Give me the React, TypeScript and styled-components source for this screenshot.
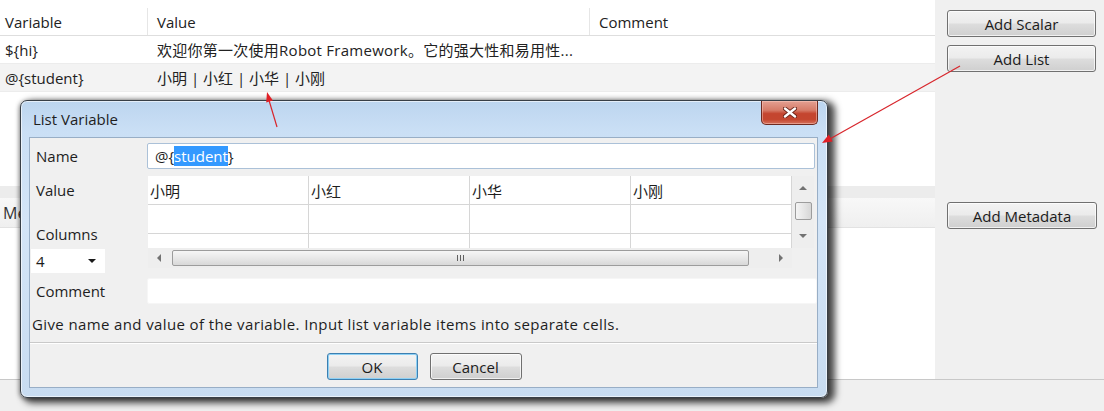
import React from 'react';
import styled, { createGlobalStyle } from 'styled-components';

const UI_FONT = `"Open Sans", "Noto Sans CJK SC", sans-serif`;

const GlobalStyle = createGlobalStyle`
  html, body { margin: 0; padding: 0; background: #ffffff; }
  body { font-family: ${UI_FONT}; font-size: 15px; color: #1b1b1b; }
  * { box-sizing: border-box; }
`;

const Page = styled.div`
  position: relative;
  width: 1104px;
  height: 411px;
  overflow: hidden;
  display: flex;
  flex-direction: column;
  background: #ffffff;
`;

const Workspace = styled.div`
  flex: 0 0 379px;
  display: flex;
`;

const Editor = styled.div`
  flex: 0 0 935px;
  display: flex;
  flex-direction: column;
  background: #ffffff;
`;

const TableRow = styled.div<{ $variant: 'head' | 'plain' | 'alt' }>`
  display: grid;
  grid-template-columns: 148px 442px 1fr;
  height: ${p => (p.$variant === 'head' ? 36 : 28)}px;
  padding-top: ${p => (p.$variant === 'head' ? 8 : 0)}px;
  background: ${p => (p.$variant === 'alt' ? '#f3f3f3' : '#ffffff')};
  border-bottom: 1px solid ${p => (p.$variant === 'head' ? '#dedede' : '#ececec')};
`;

const Cell = styled.div<{ $head?: boolean; $first?: boolean; $spread?: boolean }>`
  display: flex;
  align-items: center;
  padding-left: ${p => (p.$first ? 5 : 9)}px;
  white-space: nowrap;
  overflow: hidden;
  color: #222;
  letter-spacing: ${p => (p.$spread ? '0.26px' : 'normal')};
  border-right: ${p => (p.$head ? '1px solid #e6e6e6' : 'none')};
  &:last-child { border-right: none; }
`;

const Gap = styled.div<{ $h: number }>`
  flex: 0 0 ${p => p.$h}px;
`;

const Band = styled.div`
  flex: 0 0 12px;
  background: #ececec;
`;

const MetaRow = styled.div`
  flex: 0 0 30px;
  display: flex;
  align-items: center;
  padding-left: 3px;
  background: linear-gradient(#f8f8f8, #efefef);
  border-bottom: 1px solid #e2e2e2;
  color: #333;
  font-size: 16px;
`;

const Fill = styled.div`
  flex: 1;
  background: #ffffff;
`;

const Side = styled.div`
  flex: 1;
  display: flex;
  flex-direction: column;
  align-items: flex-start;
  padding: 10px 0 0 12px;
  background: #f0f0f0;
`;

const WinButton = styled.button<{ $w: number; $mt?: number; $focus?: boolean }>`
  width: ${p => p.$w}px;
  height: 27px;
  margin-top: ${p => p.$mt ?? 0}px;
  padding: 0;
  font-family: ${UI_FONT};
  font-size: 15px;
  color: #1b1b1b;
  border: 1px solid ${p => (p.$focus ? '#3c7fb1' : '#707070')};
  border-radius: 3px;
  background: linear-gradient(#f3f3f3 0%, #ebebeb 48%, #dddddd 52%, #cfcfcf 100%);
  box-shadow: inset 0 0 0 1px ${p => (p.$focus ? '#8ed0f4' : 'rgba(255,255,255,0.7)')};
`;

const BottomStrip = styled.div`
  flex: 1;
  background: #f0f0f0;
  border-top: 1px solid #c8c8c8;
`;

/* ---------- dialog ---------- */

const Dialog = styled.div`
  position: absolute;
  left: 20px;
  top: 100px;
  width: 808px;
  height: 298px;
  display: flex;
  flex-direction: column;
  padding: 0 9px 9px 8px;
  border: 1px solid #383f47;
  border-radius: 7px;
  background: linear-gradient(#bcd5ef 0px, #cadff5 30px, #d4e5f7 120px, #c8dcf1 100%);
  box-shadow: inset 0 0 0 1px rgba(255, 255, 255, 0.6), 5px 3px 7px 2px rgba(0, 0, 0, 0.72),
    -1px 1px 4px rgba(0, 0, 0, 0.35);
`;

const TitleBar = styled.div`
  flex: 0 0 36px;
  display: flex;
  align-items: flex-start;
  justify-content: space-between;
`;

const Title = styled.div`
  padding: 8px 0 0 4px;
  font-size: 15px;
  color: #1e1e1e;
`;

const CloseButton = styled.div`
  width: 57px;
  height: 24px;
  display: flex;
  align-items: center;
  justify-content: center;
  border: 1px solid #6e2a20;
  border-top: none;
  border-radius: 0 0 5px 5px;
  background: linear-gradient(#e4a092 0%, #d67b68 40%, #c4452f 55%, #c4462f 80%, #d5715c 100%);
  box-shadow: inset 0 0 0 1px rgba(255, 210, 200, 0.45);
`;

const Client = styled.div`
  flex: 1;
  display: flex;
  flex-direction: column;
  background: #f0f0f0;
  border: 1px solid #98aec6;
`;

const FormRow = styled.div<{ $mt: number; $h: number }>`
  display: grid;
  grid-template-columns: 117px 1fr;
  height: ${p => p.$h}px;
  margin-top: ${p => p.$mt}px;
`;

const Label = styled.div<{ $h?: number; $mt?: number }>`
  height: ${p => p.$h ?? 26}px;
  margin-top: ${p => p.$mt ?? 0}px;
  display: flex;
  align-items: center;
  padding-left: 6px;
  color: #1e1e1e;
`;

const LabelColumn = styled.div`
  display: flex;
  flex-direction: column;
  padding-top: 4px;
`;

const TextBox = styled.div<{ $framed?: boolean }>`
  height: 26px;
  display: flex;
  align-items: center;
  padding-left: 7px;
  margin-right: ${p => (p.$framed ? 2 : 0)}px;
  background: #ffffff;
  border: 1px solid ${p => (p.$framed ? '#abc1d8' : '#f6f6f6')};
  border-radius: 2px;
  color: #1e1e1e;
`;

const Selected = styled.span`
  background: #3399ff;
  color: #ffffff;
`;

const Combo = styled.div`
  flex: 0 0 24px;
  width: 74px;
  margin: 5px 0 0 1px;
  display: flex;
  align-items: center;
  justify-content: space-between;
  padding: 0 9px 0 5px;
  background: #ffffff;
`;

const ListArea = styled.div`
  display: grid;
  grid-template-columns: 644px 22px;
  grid-template-rows: 72px 20px;
  margin-left: 1px;
`;

const Cells = styled.div`
  display: grid;
  grid-template-columns: repeat(4, 161px);
  grid-auto-rows: 29px;
  overflow: hidden;
  background: #ffffff;
`;

const GridCell = styled.div`
  display: flex;
  align-items: center;
  padding-left: 2px;
  border-right: 1px solid #d6d6d6;
  border-bottom: 1px solid #d6d6d6;
  color: #1e1e1e;
`;

const VScroll = styled.div`
  display: flex;
  flex-direction: column;
  align-items: center;
  background: #eeeeee;
`;

const HScroll = styled.div`
  display: flex;
  align-items: center;
  background: #eeeeee;
`;

const ScrollButton = styled.div<{ $size: number; $vertical?: boolean }>`
  flex: 0 0 ${p => p.$size}px;
  ${p => (p.$vertical ? 'width: 100%;' : 'height: 100%;')}
  display: flex;
  align-items: center;
  justify-content: center;
`;

const Arrow = styled.span<{ $dir: 'up' | 'down' | 'left' | 'right'; $color?: string }>`
  width: 0;
  height: 0;
  border-style: solid;
  ${p => {
    const c = p.$color ?? '#727272';
    switch (p.$dir) {
      case 'up':
        return `border-width: 0 4px 4px 4px; border-color: transparent transparent ${c} transparent;`;
      case 'down':
        return `border-width: 4px 4px 0 4px; border-color: ${c} transparent transparent transparent;`;
      case 'left':
        return `border-width: 4px 4px 4px 0; border-color: transparent ${c} transparent transparent;`;
      default:
        return `border-width: 4px 0 4px 4px; border-color: transparent transparent transparent ${c};`;
    }
  }}
`;

const Thumb = styled.div<{ $vertical?: boolean }>`
  display: flex;
  align-items: center;
  justify-content: center;
  border: 1px solid #9c9c9c;
  border-radius: 2px;
  ${p =>
    p.$vertical
      ? `width: 17px; height: 18px; margin-top: 2px;
         background: linear-gradient(to right, #f4f4f4, #e6e6e6 50%, #d6d6d6);`
      : `width: 577px; height: 16px; margin-left: 2px;
         background: linear-gradient(#f6f6f6, #e8e8e8 50%, #d8d8d8);`}
`;

const Grip = styled.span`
  width: 7px;
  height: 6px;
  background: repeating-linear-gradient(to right, #606060 0 1px, transparent 1px 3px);
`;

const Spacer = styled.div`
  flex: 1;
`;

const Corner = styled.div`
  background: #f0f0f0;
`;

const HelpText = styled.div`
  height: 20px;
  margin-top: 10px;
  padding-left: 2px;
  display: flex;
  align-items: center;
  color: #1e1e1e;
  white-space: nowrap;
  letter-spacing: 0.38px;
`;

const Separator = styled.div`
  height: 1px;
  margin-top: 8px;
  background: #c9c9c9;
  border-bottom: 1px solid #ffffff;
  box-sizing: content-box;
`;

const ButtonRow = styled.div`
  display: flex;
  justify-content: center;
  gap: 12px;
  margin-top: 9px;
  padding-left: 1px;
`;

const Annotations = styled.svg`
  position: absolute;
  left: 0;
  top: 0;
  pointer-events: none;
`;

const CloseGlyph = () => (
  <svg width="14" height="11" viewBox="0 0 14 11">
    <path d="M2 1.5 L12 9.5 M12 1.5 L2 9.5" stroke="#6b2419" strokeWidth="4.2" strokeLinecap="round" />
    <path d="M2 1.5 L12 9.5 M12 1.5 L2 9.5" stroke="#ffffff" strokeWidth="2.4" strokeLinecap="round" />
  </svg>
);

const values = ['小明', '小红', '小华', '小刚'];

export default function App() {
  return (
    <>
      <GlobalStyle />
      <Page>
        <Workspace>
          <Editor>
            <TableRow $variant="head">
              <Cell $head $first>Variable</Cell>
              <Cell $head>Value</Cell>
              <Cell $head>Comment</Cell>
            </TableRow>
            <TableRow $variant="plain">
              <Cell $first>{'${hi}'}</Cell>
              <Cell $spread>欢迎你第一次使用Robot Framework。它的强大性和易用性...</Cell>
              <Cell />
            </TableRow>
            <TableRow $variant="alt">
              <Cell $first>{'@{student}'}</Cell>
              <Cell>小明 | 小红 | 小华 | 小刚</Cell>
              <Cell />
            </TableRow>
            <Gap $h={94} />
            <Band />
            <MetaRow>Metadata</MetaRow>
            <Fill />
          </Editor>
          <Side>
            <WinButton $w={149}>Add Scalar</WinButton>
            <WinButton $w={149} $mt={8}>Add List</WinButton>
            <WinButton $w={150} $mt={130}>Add Metadata</WinButton>
          </Side>
        </Workspace>
        <BottomStrip />

        <Dialog>
          <TitleBar>
            <Title>List Variable</Title>
            <CloseButton>
              <CloseGlyph />
            </CloseButton>
          </TitleBar>
          <Client>
            <FormRow $mt={5} $h={26}>
              <Label>Name</Label>
              <TextBox $framed>
                @{'{'}
                <Selected>student</Selected>
                {'}'}
              </TextBox>
            </FormRow>
            <FormRow $mt={7} $h={92}>
              <LabelColumn>
                <Label $h={20}>Value</Label>
                <Label $h={20} $mt={24}>Columns</Label>
                <Combo>
                  <span>4</span>
                  <Arrow $dir="down" $color="#1a1a1a" />
                </Combo>
              </LabelColumn>
              <ListArea>
                <Cells>
                  {values.map(v => (
                    <GridCell key={v}>{v}</GridCell>
                  ))}
                  {Array.from({ length: 8 }).map((_, i) => (
                    <GridCell key={i} />
                  ))}
                </Cells>
                <VScroll>
                  <ScrollButton $size={24} $vertical>
                    <Arrow $dir="up" />
                  </ScrollButton>
                  <Thumb $vertical />
                  <Spacer />
                  <ScrollButton $size={24} $vertical>
                    <Arrow $dir="down" />
                  </ScrollButton>
                </VScroll>
                <HScroll>
                  <ScrollButton $size={22}>
                    <Arrow $dir="left" />
                  </ScrollButton>
                  <Thumb>
                    <Grip />
                  </Thumb>
                  <Spacer />
                  <ScrollButton $size={22}>
                    <Arrow $dir="right" />
                  </ScrollButton>
                </HScroll>
                <Corner />
              </ListArea>
            </FormRow>
            <FormRow $mt={10} $h={26}>
              <Label>Comment</Label>
              <TextBox />
            </FormRow>
            <HelpText>Give name and value of the variable. Input list variable items into separate cells.</HelpText>
            <Separator />
            <ButtonRow>
              <WinButton $w={91} $focus>OK</WinButton>
              <WinButton $w={92}>Cancel</WinButton>
            </ButtonRow>
          </Client>
        </Dialog>

        <Annotations width="1104" height="411" viewBox="0 0 1104 411">
          <line x1="277" y1="127" x2="268" y2="97" stroke="#d8262c" strokeWidth="1.2" />
          <polygon points="267,92 272.9,100.6 266.2,102.6" fill="#e01f26" />
          <line x1="960" y1="66" x2="828" y2="140" stroke="#d8262c" strokeWidth="1.2" />
          <polygon points="822,143 832.7,141.6 828.8,134.6" fill="#e01f26" />
        </Annotations>
      </Page>
    </>
  );
}
